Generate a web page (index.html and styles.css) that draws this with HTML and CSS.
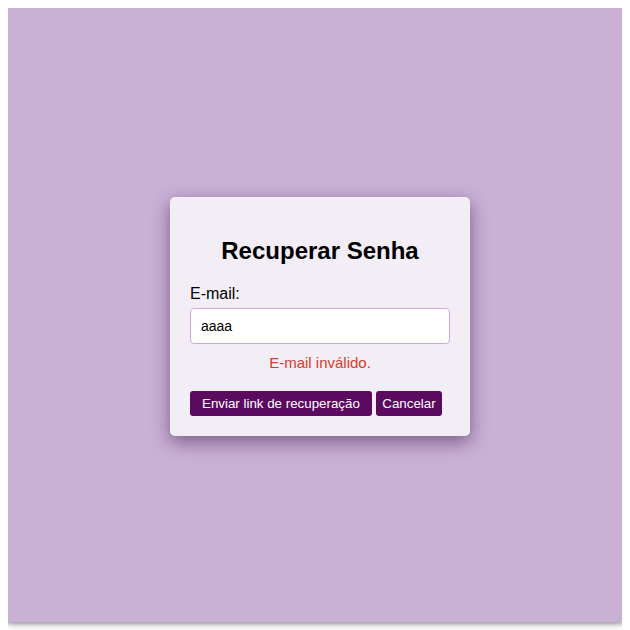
FILE: index.html
```html
<!DOCTYPE html>
<html lang="pt-BR">
<head>
<meta charset="utf-8">
<title>Recuperar Senha</title>
<link rel="stylesheet" href="styles.css">
</head>
<body>
<div class="screen">
  <div class="card">
    <h2 class="title">Recuperar Senha</h2>
    <label class="label" for="email">E-mail:</label>
    <input class="input" id="email" type="text" value="aaaa">
    <p class="error">E-mail inválido.</p>
    <div class="actions">
      <button class="btn btn-send">Enviar link de recuperação</button>
      <button class="btn btn-cancel">Cancelar</button>
    </div>
  </div>
</div>
</body>
</html>
```
FILE: styles.css
```css
html, body {
  height: 100%;
}
body {
  margin: 8px;
  background: #ffffff;
  font-family: "Liberation Sans", Arial, sans-serif;
}
.screen {
  box-sizing: border-box;
  height: 614px;
  padding-left: 10px;
  background: #c9b0d5;
  box-shadow: 0 0 4px 2px rgba(0, 0, 0, 0.25), 0 0 10px rgba(0, 0, 0, 0.35);
  display: flex;
  align-items: center;
  justify-content: center;
}
.card {
  box-sizing: border-box;
  width: 300px;
  padding: 20px;
  background: #f3eef6;
  border-radius: 5px;
  box-shadow: 0 6px 18px rgba(50, 10, 60, 0.5);
  margin-top: 3px;
}
.title {
  margin: 20px 0;
  font-size: 24px;
  font-weight: bold;
  text-align: center;
  color: #000;
}
.label {
  display: block;
  font-size: 16px;
  color: #000;
  margin-bottom: 5px;
}
.input {
  display: block;
  box-sizing: border-box;
  width: 100%;
  height: 36px;
  padding: 8px 10px;
  border: 1px solid #cfa9dc;
  border-radius: 4px;
  background: #fff;
  font-family: "Liberation Sans", Arial, sans-serif;
  font-size: 14px;
  color: #000;
}
.error {
  margin: 10px 0 0;
  text-align: center;
  font-size: 15px;
  color: #d83a2c;
}
.actions {
  margin-top: 20px;
  font-size: 16px;
  line-height: 0;
}
.btn {
  height: 25px;
  border: none;
  border-radius: 3px;
  background: #5c0a60;
  color: #fff;
  font-family: "Liberation Sans", Arial, sans-serif;
  font-size: 13.333px;
  line-height: 15px;
  vertical-align: top;
}
.btn-send {
  padding: 5px 12px;
}
.btn-cancel {
  padding: 5px 6px;
}
```
